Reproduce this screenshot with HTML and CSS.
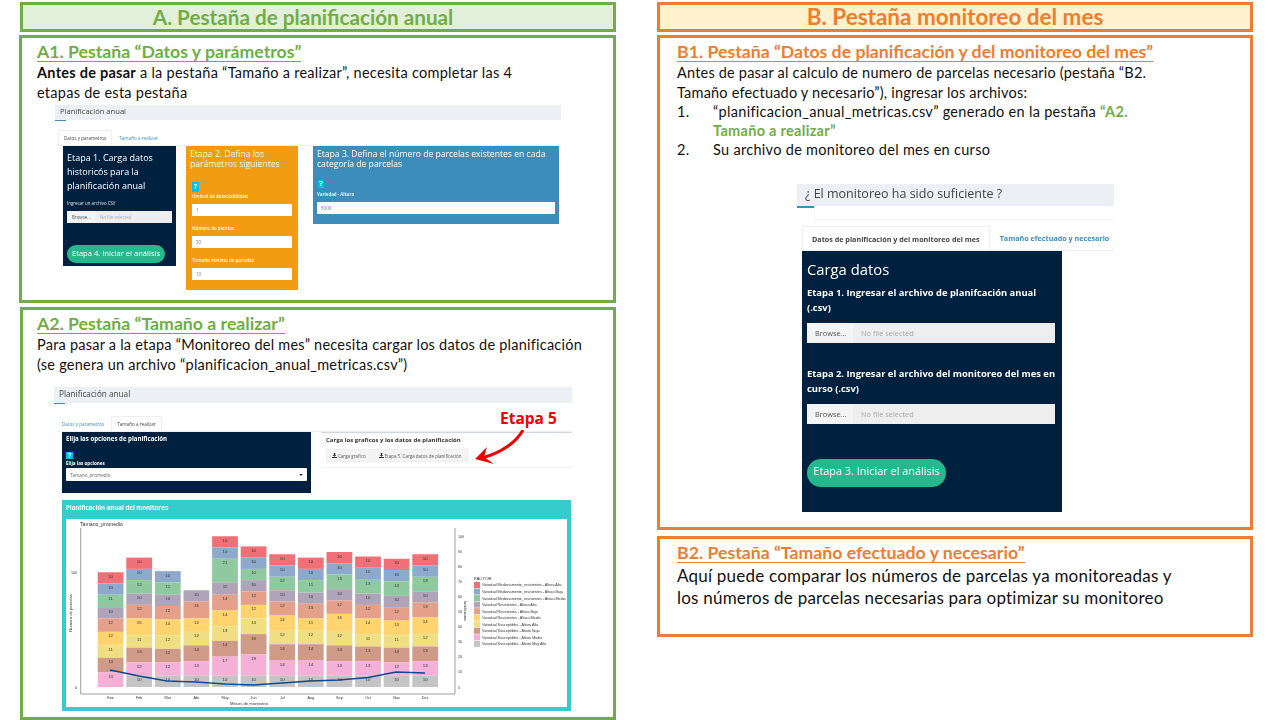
FILE: index.html
```html
<!DOCTYPE html>
<html lang="es">
<head>
  <meta charset="UTF-8">
  <title>Pestañas de la aplicación</title>
  <link rel="stylesheet" href="styles.css">
</head>
<body>
  <div class="slide">
    <div class="col col-a">
      <div class="title title-a">A. Pestaña de planificación anual</div>

      <div class="panel panel-a1">
        <h2 class="head">A1. Pestaña “Datos y parámetros”</h2>
        <p class="text"><b>Antes de pasar</b> a la pestaña “Tamaño a realizar”, necesita completar las 4<br>etapas de esta pestaña</p>

        <div class="shot shot-a1">
          <div class="app-bar">Planificación anual</div>
          <div class="app-tick"></div>
          <div class="tabs">
            <span class="tab active">Datos y parametros</span>
            <span class="tab">Tamaño a realizar</span>
          </div>
          <div class="boxes">
            <div class="box navy">
              <div class="box-title">Etapa 1. Carga datos<br>historicós para la<br>planificación anual</div>
              <div class="mini-label">Ingresar un archivo CSV</div>
              <div class="file"><span class="browse">Browse...</span><span class="nofile">No file selected</span></div>
              <div class="go">Etapa 4. Iniciar el análisis</div>
            </div>
            <div class="box amber">
              <div class="box-title">Etapa 2. Defina los<br>parámetros siguientes</div>
              <span class="help">?</span>
              <div class="mini-label">Umbral de detectabilidad</div>
              <div class="field">1</div>
              <div class="mini-label">Número de plantas</div>
              <div class="field">30</div>
              <div class="mini-label">Tamaño mínimo de parcelas</div>
              <div class="field">10</div>
            </div>
            <div class="box steel">
              <div class="box-title">Etapa 3. Defina el número de parcelas existentes en cada<br>categoría de parcelas</div>
              <span class="help">?</span>
              <div class="mini-label">Variedad - Altura</div>
              <div class="field">5000</div>
            </div>
          </div>
        </div>
      </div>

      <div class="panel panel-a2">
        <h2 class="head">A2. Pestaña “Tamaño a realizar”</h2>
        <p class="text">Para pasar a la etapa “Monitoreo del mes” necesita cargar los datos de planificación<br>(se genera un archivo “planificacion_anual_metricas.csv”)</p>

        <div class="shot shot-a2">
          <div class="app-bar">Planificación anual</div>
          <div class="app-tick"></div>
          <div class="tabs">
            <span class="tab">Datos y parametros</span>
            <span class="tab active">Tamaño a realizar</span>
          </div>
          <div class="options">
            <div class="opt-box">
              <div class="opt-title">Elija las opciones de planificación</div>
              <span class="help">?</span>
              <div class="opt-label">Elija las opciones</div>
              <div class="select"><span>Tamano_promedio</span><span class="caret"></span></div>
            </div>
            <div class="dl-box">
              <div class="dl-title">Carga los graficos y los datos de planificación</div>
              <div class="dl-btns">
                <span class="dl-btn"><svg viewBox="0 0 10 10"><path d="M3.5 0h3v4h2L5 7.5 1.5 4h2zM0 8h10v2H0z"/></svg>Carga grafico</span>
                <span class="dl-btn"><svg viewBox="0 0 10 10"><path d="M3.5 0h3v4h2L5 7.5 1.5 4h2zM0 8h10v2H0z"/></svg>Etapa 5. Carga datos de planificación</span>
              </div>
            </div>
          </div>
          <div class="plot-box">
            <div class="plot-title">Planificación anual del monitoreo</div>
            <svg id="chart" class="plot" viewBox="0 0 501 188"></svg>
          </div>
        </div>

        <div class="etapa">Etapa 5</div>
        <svg class="etapa-arrow" viewBox="0 0 60 40">
          <path d="M49 0C42 13 26 23 8 28" fill="none" stroke="#f00000" stroke-width="3"/>
          <path d="M1 29 13 17 10 27 20 34z" fill="#f00000"/>
        </svg>
      </div>
    </div>

    <div class="col col-b">
      <div class="title title-b">B. Pestaña monitoreo del mes</div>

      <div class="panel panel-b1">
        <h2 class="head">B1. Pestaña “Datos de planificación y del monitoreo del mes”</h2>
        <p class="text">Antes de pasar al calculo de numero de parcelas necesario (pestaña “B2.<br>Tamaño efectuado y necesario”), ingresar los archivos:</p>
        <ol class="steps">
          <li>“planificacion_anual_metricas.csv” generado en la pestaña <b>“A2.<br>Tamaño a realizar”</b></li>
          <li>Su archivo de monitoreo del mes en curso</li>
        </ol>

        <div class="shot shot-b1">
          <div class="big-bar">¿ El monitoreo ha sido suficiente ?</div>
          <div class="big-tick"></div>
          <div class="big-strip"></div>
          <div class="big-tabs">
            <span class="big-tab active">Datos de planificación y del monitoreo del mes</span>
            <span class="big-tab">Tamaño efectuado y necesario</span>
          </div>
          <div class="load-box">
            <div class="load-title">Carga datos</div>
            <div class="load-label">Etapa 1. Ingresar el archivo de planifcación anual<br>(.csv)</div>
            <div class="load-file"><span class="load-browse">Browse...</span><span class="load-none">No file selected</span></div>
            <div class="load-label second">Etapa 2. Ingresar el archivo del monitoreo del mes en<br>curso (.csv)</div>
            <div class="load-file"><span class="load-browse">Browse...</span><span class="load-none">No file selected</span></div>
            <div class="load-go">Etapa 3. Iniciar el análisis</div>
          </div>
        </div>
      </div>

      <div class="panel panel-b2">
        <h2 class="head">B2. Pestaña “Tamaño efectuado y necesario”</h2>
        <p class="text-big">Aquí puede comparar los números de parcelas ya monitoreadas y<br>los números de parcelas necesarias para optimizar su monitoreo</p>
      </div>
    </div>
  </div>
  <script src="chart.js"></script>
</body>
</html>
```

FILE: styles.css
```css
:root { --green: #70ad47; --orange: #ed7d31; --navy: #00203f; --teal: #36cccc; --go: #26b88d; }
html, body { margin: 0; padding: 0; background: #fff; }
body { font-family: Lato, "Liberation Sans", sans-serif; color: #111; overflow: hidden; }

.slide { display: grid; grid-template-columns: 597px 596px; column-gap: 41px; padding: 2px 0 0 19px; width: 1280px; height: 720px; box-sizing: border-box; }
.col { display: flex; flex-direction: column; }

.title { height: 30px; box-sizing: border-box; border: 3px solid; text-align: center; font-weight: 700; line-height: 24px; }
.title-a { margin-left: 1px; padding-right: 30px; border-color: var(--green); background: #e2f0d9; color: var(--green); font-size: 20.7px; }
.title-b { border-color: var(--orange); background: #fff2cc; color: var(--orange); font-size: 22.5px; }

.panel { position: relative; box-sizing: border-box; border: 3px solid; padding: 4px 15px 0; }
.col-a .panel { border-color: var(--green); }
.col-b .panel { border-color: var(--orange); padding-left: 17px; }
.panel-a1 { margin-top: 3px; height: 268px; }
.panel-a2 { margin: 4px 0 0 1px; height: 413px; padding-left: 14px; }
.panel-b1 { margin-top: 3px; height: 495px; }
.panel-b2 { margin-top: 6px; height: 101px; }

.head { display: inline-block; margin: 0; font-size: 17.7px; line-height: 18px; font-weight: 700; border-bottom: 1px solid; }
.col-a .head { color: var(--green); }
.col-b .head { color: var(--orange); }
.text { margin: 1px 0 0; font-size: 14.5px; letter-spacing: .26px; line-height: 19.5px; }
.panel-a2 .text { letter-spacing: .23px; }
.panel-b1 .text { letter-spacing: .2px; }
.text-big { margin: 2px 0 0; font-size: 17px; letter-spacing: .22px; line-height: 22px; }

.steps { margin: 0; padding: 0; list-style: none; counter-reset: step; font-size: 14.5px; letter-spacing: .3px; line-height: 19px; }
.steps li { counter-increment: step; position: relative; padding-left: 36px; }
.steps li::before { content: counter(step) "."; position: absolute; left: 0; }
.steps b { color: var(--green); }

.shot { font-family: "Open Sans", sans-serif; filter: blur(.3px); }

/* small app screenshots */
.shot-a1 { margin: 3px 0 0 18px; width: 506px; }
.shot-a2 { margin: 13px 0 0 17px; width: 518px; }
.app-bar { height: 15px; padding-left: 5px; background: #ecf0f5; color: #444; font-size: 7.6px; line-height: 13px; }
.shot-a2 .app-bar { height: 16px; font-size: 8.2px; line-height: 14px; }
.app-tick { width: 11px; height: 1px; background: #3c8dbc; }
.tabs { display: flex; box-sizing: border-box; margin: 9px 0 0 3px; height: 16px; align-items: stretch; border-bottom: 1px solid #eee; font-size: 4.6px; }
.shot-a2 .tabs { margin: 12px 0 0 3px; }
.tab { display: flex; align-items: center; padding: 0 5px; color: #3c8dbc; }
.tab + .tab { margin-left: 2px; }
.tab.active { color: #444; background: #fff; border: 1px solid #eee; border-bottom: 0; border-radius: 2px 2px 0 0; }

.boxes { display: flex; align-items: flex-start; padding-left: 8px; }
.box { box-sizing: border-box; color: #fff; font-size: 8.6px; }
.box-title { line-height: 10px; }
.mini-label { margin-top: 1px; font-size: 4.4px; font-weight: 700; line-height: 6px; opacity: .85; }
.help { display: block; width: 7px; height: 10px; background: #00c0ef; color: #fff; font-size: 7px; line-height: 10px; text-align: center; font-weight: 700; }
.field { height: 12px; margin-top: 5px; padding-left: 4px; background: #fff; color: #777; font-size: 4.5px; line-height: 12px; }

.navy { width: 113px; height: 120px; padding: 5px 4px; background: var(--navy); font-size: 9px; }
.navy .box-title { line-height: 14px; }
.navy .mini-label { margin-top: 7px; font-weight: 400; }
.file { display: flex; height: 12px; margin-top: 5px; background: #eee; font-size: 4.4px; line-height: 12px; }
.browse { width: 29px; padding-left: 5px; box-sizing: border-box; background: #f4f4f4; color: #555; }
.nofile { padding-left: 4px; color: #aaa; }
.go { width: 98px; height: 18px; margin-top: 22px; border-radius: 9px; background: var(--go); text-align: center; font-size: 7.6px; line-height: 16px; }

.amber { width: 112px; height: 144px; margin-left: 10px; padding: 3px 6px 0 4px; background: #f39c12; }
.amber .help { margin: 13px 0 0 2px; }
.amber .mini-label { margin-left: 2px; opacity: .8; }
.amber .field + .mini-label { margin-top: 9px; }
.amber .field { margin-left: 2px; }
.steel { width: 246px; height: 78px; margin-left: 15px; padding: 3px 4px 0; background: #3c8dbc; }
.steel .help { margin: 11px 0 0 1px; width: 6px; height: 8px; line-height: 8px; }
.steel .mini-label { margin-top: 3px; }
.steel .field { margin: 5px 0 0; }

.options { display: flex; align-items: flex-start; padding-left: 8px; }
.opt-box { width: 249px; height: 61px; box-sizing: border-box; padding: 3px 4px; background: var(--navy); color: #fff; }
.opt-title { font-size: 6.1px; font-weight: 700; line-height: 8px; }
.opt-box .help { margin-top: 9px; width: 7px; height: 7px; line-height: 7px; }
.opt-label { margin-top: 1px; font-size: 4.6px; font-weight: 700; line-height: 6px; }
.select { display: flex; justify-content: space-between; align-items: center; height: 13px; margin-top: 2px; padding: 0 4px; box-sizing: border-box; background: #fff; color: #666; font-size: 4.6px; border-radius: 1px; }
.caret { border: 2px solid transparent; border-top-color: #333; border-bottom: 0; }
.dl-box { width: 250px; height: 36px; margin-left: 11px; box-sizing: border-box; padding: 3px 4px; border-top: 1px solid #d2d6de; border-bottom: 1px solid #f0f0f0; }
.dl-title { color: #333; font-size: 6px; font-weight: 700; line-height: 8px; }
.dl-btns { display: flex; gap: 1px; margin-top: 5px; }
.dl-btn { display: flex; align-items: center; gap: 1px; height: 13px; padding: 0 5px; box-sizing: border-box; background: #f4f4f4; border: 1px solid #eee; color: #555; font-size: 4.5px; }
.dl-btn svg { width: 5px; height: 5px; fill: #333; }

.plot-box { width: 509px; height: 211px; margin: 7px 0 0 8px; box-sizing: border-box; padding: 0 4px 4px; background: var(--teal); }
.plot-title { height: 19px; color: #fff; font-size: 6.1px; font-weight: 700; line-height: 16px; }
.plot { display: block; width: 501px; height: 188px; background: #fff; font-family: "Liberation Sans", sans-serif; }

.etapa { position: absolute; left: 477px; top: 98px; color: #f00000; font-family: "Open Sans", sans-serif; font-size: 15.5px; font-weight: 700; line-height: 20px; }
.etapa-arrow { position: absolute; left: 451px; top: 120px; width: 60px; height: 40px; }

/* large app screenshot */
.shot-b1 { margin: 25px 0 0 120px; width: 317px; }
.big-bar { height: 22px; padding-left: 8px; background: #ecf0f5; color: #444; font-size: 12.5px; line-height: 19px; }
.big-tick { width: 17px; height: 2px; background: #3c8dbc; }
.big-strip { height: 12px; margin-left: 17px; border-left: 1px solid #f4f4f4; border-bottom: 1px solid #f4f4f4; box-sizing: border-box; }
.big-tabs { display: flex; box-sizing: border-box; margin: 6px 0 0 5px; height: 25px; border-bottom: 1px solid #eee; font-size: 7.2px; font-weight: 700; line-height: 24px; }
.big-tab { padding: 0 0 0 10px; color: #3c8dbc; }
.big-tab.active { padding: 0 9px; color: #444; border: 1px solid #eee; border-bottom: 0; border-radius: 2px 2px 0 0; }
.load-box { width: 260px; height: 261px; margin-left: 5px; padding: 9px 7px 0 5px; box-sizing: border-box; background: var(--navy); color: #fff; }
.load-title { font-size: 14.8px; line-height: 18px; }
.load-label { margin-top: 7px; font-size: 9.4px; font-weight: 700; line-height: 15px; white-space: nowrap; }
.load-label.second { margin-top: 23px; }
.load-file { display: flex; height: 20px; margin-top: 8px; background: #eee; font-size: 7.4px; line-height: 20px; }
.load-browse { width: 46px; padding-left: 8px; box-sizing: border-box; background: #f4f4f4; color: #555; }
.load-none { padding-left: 8px; color: #aaa; }
.load-go { width: 139px; height: 28px; margin-top: 35px; border-radius: 14px; background: var(--go); font-size: 10.9px; line-height: 23px; text-align: center; }
```

FILE: chart.js
```js
const colors = ["#f07078","#8fa9cc","#8fc9a0","#b0a5b8","#e5a08c","#ffd36e","#efdf82","#d09a88","#f5b0d8","#c4c4c4"];
const factors = ["Medianamente_resistentes - Altura Alta","Medianamente_resistentes - Altura Baja","Medianamente_resistentes - Altura Media",
  "Resistentes - Altura Alta","Resistentes - Altura Baja","Resistentes - Altura Media",
  "Susceptibles - Altura Alta","Susceptibles - Altura Baja","Susceptibles - Altura Media","Susceptibles - Altura Muy Alta"];
// top of the stack first
const months = [
  ["Ene",[10,10,11,10,12,12,11,13,13,0]],
  ["Feb",[10,10,12,10,12,15,11,13,12,10]],
  ["Mar",[0,10,11,10,12,14,12,12,12,10]],
  ["Abr",[0,0,0,10,15,12,12,14,13,10]],
  ["May",[10,10,21,11,14,14,13,14,17,10]],
  ["Jun",[10,10,10,10,12,12,14,18,19,10]],
  ["Jul",[10,10,12,10,12,14,12,14,14,10]],
  ["Aug",[10,10,11,10,13,11,12,14,14,10]],
  ["Sep",[10,10,13,10,12,16,12,14,13,10]],
  ["Oct",[10,10,13,10,12,14,11,13,13,10]],
  ["Nov",[10,10,13,10,12,13,11,13,12,10]],
  ["Dec",[10,10,13,10,13,14,12,13,13,10]]
];
const line = [[44,151],[73,157],[101,162],[130,163],[159,165],[187,166],[216,164],[244,162],[273,161],[302,158.5],[330,153],[359,154]];
const baseY = 168, unit = 1.125;

let out = "";
const text = (x, y, s, size, attrs = "") => `<text x="${x}" y="${y}" font-size="${size}" fill="#333" ${attrs}>${s}</text>`;

months.forEach(([name, vals], m) => {
  const x = 31.7 + m * 28.6;
  let y = baseY - vals.reduce((a, b) => a + b, 0) * unit;
  vals.forEach((v, i) => {
    if (!v) return;
    const h = v * unit;
    out += `<rect x="${x}" y="${y}" width="25.8" height="${h}" fill="${colors[i]}"/>`;
    out += text(x + 12.9, y + 5.5, v, 4.4, 'text-anchor="middle"');
    y += h;
  });
  out += text(x + 12.9, 180, name, 3.8, 'text-anchor="middle"');
});

// axes
out += `<path d="M14.7 9V175H389V9" fill="none" stroke="#888" stroke-width=".8"/>`;
out += `<polyline points="${line.join(" ")}" fill="none" stroke="#0b4a8f" stroke-width="1.6"/>`;
out += text(14, 7, "Tamano_promedio", 5.2);
out += text(11, 55, "100", 3.6, 'text-anchor="end"');
out += text(11, 170, "0", 3.6, 'text-anchor="end"');
out += text(183, 185.5, "Meses de monitoreo", 4.2, 'text-anchor="middle"');
out += text(0, 0, "Numero de parcelas", 4.2, 'text-anchor="middle" transform="translate(6 94) rotate(-90)"');
out += text(0, 0, "Incidencias", 4, 'text-anchor="middle" transform="translate(398 92) rotate(90)"');
for (let i = 0; i <= 10; i++) out += text(392, 169.5 - i * 15.1, i * 10, 3.6);

// legend
out += text(408, 61, "FACTOR", 4.4);
factors.forEach((f, i) => {
  const y = 63 + i * 6.55;
  out += `<rect x="408" y="${y}" width="6" height="6" fill="${colors[i]}"/>`;
  out += text(416, y + 4.4, "Variedad " + f, 3.7);
});

document.getElementById("chart").innerHTML = out;
```
